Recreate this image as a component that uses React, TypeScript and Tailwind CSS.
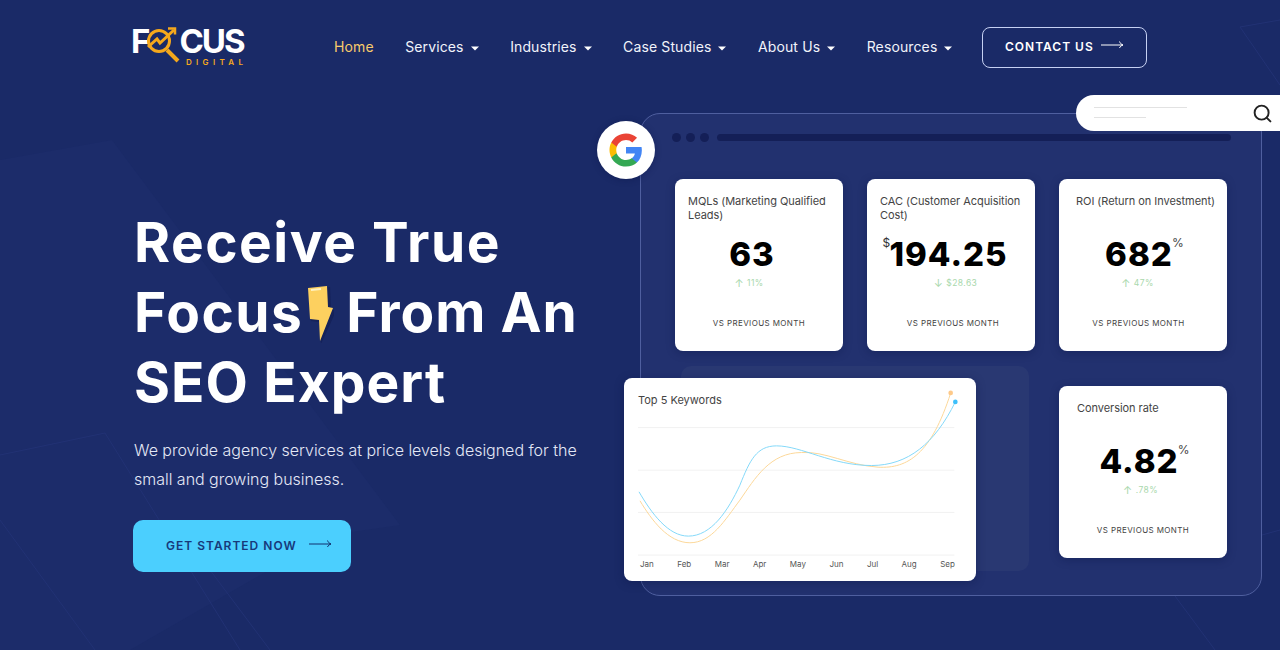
import { Search } from "lucide-react"

const navItems = [
  { label: "Home", active: true },
  { label: "Services", caret: true },
  { label: "Industries", caret: true },
  { label: "Case Studies", caret: true },
  { label: "About Us", caret: true },
  { label: "Resources", caret: true },
]

const months = ["Jan", "Feb", "Mar", "Apr", "May", "Jun", "Jul", "Aug", "Sep"]

function LongArrow({ color = "#fff" }: { color?: string }) {
  return (
    <svg width="23" height="10" viewBox="0 0 23 10" fill="none" stroke={color} strokeWidth="1" className="mb-[4px]">
      <path d="M0 5h22M18.5 1.5c.6 1.6 1.8 3 3.5 3.5-1.7.5-2.9 1.6-3.5 3" />
    </svg>
  )
}

function Caret() {
  return (
    <svg width="8" height="5" viewBox="0 0 8 5" className="mt-[3px]">
      <path d="M0 .5h8L4 4.5z" fill="#fff" />
    </svg>
  )
}

function Logo() {
  return (
    <div className="relative h-[40px] w-[112px] font-['Inter',sans-serif] text-white">
      <div className="flex h-[30px] items-center text-[33px] font-bold leading-none tracking-[-2px]">
        <span className="-ml-[2px]">F</span>
        <svg width="33" height="38" viewBox="0 0 33 38" className="-ml-[1px] mt-[6px] shrink-0" fill="none" stroke="#f5a81c" strokeWidth="3">
          <circle cx="12" cy="15" r="10.5" />
          <path d="M20 24l11 11" strokeWidth="4" />
          <path d="M1 21l9-8 3 4 14-13" strokeWidth="3" />
          <path d="M21 2.5h7v6" strokeWidth="2.5" />
        </svg>
        <span className="-ml-[1px]">CUS</span>
      </div>
      <div className="ml-[53px] text-[8px] font-semibold uppercase leading-[10px] tracking-[4.3px] text-[#f5a81c]">
        Digital
      </div>
    </div>
  )
}

function Bolt() {
  return (
    <svg width="30" height="58" viewBox="0 0 30 58" className="ml-[1px] mr-[12px] inline-block align-[-11px]">
      <path d="M5 4l20-3 1 22 5 2-15 33-2-22-8-1z" fill="#101a4d" opacity=".5" transform="translate(1 1)" />
      <path d="M4 3l19-2 1 21 5 1-13 33-1-21-9-1z" fill="#fdd05f" />
      <path d="M7 5l10-1" stroke="#fff2c2" strokeWidth="2" />
    </svg>
  )
}

type CardProps = {
  title: string
  value: string
  delta: string
  down?: boolean
  prefix?: string
  suffix?: boolean
  titleClass: string
  valueClass: string
  deltaClass: string
  footClass?: string
}

function MetricCard({ title, value, delta, down, prefix, suffix, titleClass, valueClass, deltaClass, footClass }: CardProps) {
  return (
    <div className="h-[172px] w-[168px] rounded-[8px] bg-white pt-[16px] shadow-[0_2px_8px_rgba(10,20,70,0.35)]">
      <div className={`h-[41px] text-[11px] leading-[13.5px] tracking-[-0.05px] text-[#444] ${titleClass}`}>{title}</div>
      <div className={`flex h-[36px] justify-center ${valueClass}`}>
        <span className="relative text-[33px] font-extrabold leading-[36px] tracking-[1px] text-[#000]">
          {prefix ? <span className="absolute -left-[7px] top-0 text-[12px] font-normal leading-[14px] tracking-normal text-[#333]">{prefix}</span> : null}
          {value}
          {suffix ? <span className="absolute -right-[11px] top-0 text-[12px] font-normal leading-[14px] tracking-normal text-[#444]">%</span> : null}
        </span>
      </div>
      <div className={`mt-[4px] flex h-[14px] items-center justify-center gap-[3px] text-[8.5px] tracking-[0.4px] text-[#a9d8ac] ${deltaClass}`}>
        <span className="text-[11px] leading-none">{down ? "↓" : "↑"}</span>
        {delta}
      </div>
      <div className={`mt-[27px] text-center text-[8px] uppercase leading-[12px] tracking-[0.4px] text-[#444] ${footClass ?? ""}`}>
        Vs previous month
      </div>
    </div>
  )
}

function KeywordChart() {
  return (
    <div className="absolute -left-[17px] top-[264px] h-[203px] w-[352px] rounded-[8px] bg-white pl-[14px] pr-[18px] pt-[15px] shadow-[0_2px_10px_rgba(10,20,70,0.4)]">
      <div className="h-[15px] text-[11px] leading-[15px] text-[#444]">Top 5 Keywords</div>
      <svg width="320" height="149" viewBox="69 114 961 446" fill="none" className="overflow-visible">
        <g stroke="#ececec" strokeWidth="2">
          <path d="M69 172h950M69 300h950M69 427h950M69 555h950" />
        </g>
        <path
          d="M75 392C110 450 160 518 225 518C290 518 330 450 375 390C420 325 465 247 560 247C630 242 700 285 790 291C880 296 950 250 1008 68"
          stroke="#fcd89a"
          strokeWidth="3"
        />
        <path
          d="M72 365C110 430 160 498 220 498C290 498 340 420 375 345C405 270 425 227 485 227C560 227 650 286 770 286C880 286 960 220 1022 95"
          stroke="#85d9f9"
          strokeWidth="3"
        />
        <circle cx="1008" cy="68" r="7" fill="#fdc98a" />
        <circle cx="1022" cy="95" r="7" fill="#3cc0fb" />
      </svg>
      <div className="flex justify-between pl-[2px] pr-[3px] text-[8px] leading-[14px] text-[#555]">
        {months.map((m) => (
          <span key={m}>{m}</span>
        ))}
      </div>
    </div>
  )
}

function Dashboard() {
  return (
    <div className="relative ml-[-1px] mt-[19px] h-[483px] w-[622px] shrink-0 rounded-[20px] border border-[#4f5f9f] bg-[#22316f] pl-[34px] pt-[18px]">
      <div className="-ml-[3px] flex h-[10px] items-center gap-[5px]">
        <span className="size-[9px] rounded-full bg-[#141f57]" />
        <span className="size-[9px] rounded-full bg-[#141f57]" />
        <span className="size-[9px] rounded-full bg-[#141f57]" />
        <span className="ml-[3px] h-[7px] w-[514px] rounded-full bg-[#141f57]" />
      </div>
      <div className="mt-[37px] flex gap-[24px]">
        <MetricCard title="MQLs (Marketing Qualified Leads)" value="63" delta="11%" titleClass="pl-[13px] pr-[8px]" valueClass="pr-[14px]" deltaClass="pr-[20px]" />
        <MetricCard title="CAC (Customer Acquisition Cost)" value="194.25" delta="$28.63" down prefix="$" titleClass="pl-[13px] pr-[8px]" valueClass="pr-[5px]" deltaClass="pl-[9px]" footClass="pl-[4px]" />
        <MetricCard title="ROI (Return on Investment)" value="682" delta="47%" suffix titleClass="pl-[17px]" valueClass="pr-[8px]" deltaClass="pr-[11px]" footClass="pr-[9px]" />
      </div>
      <div className="mt-[35px] flex justify-end pr-[34px]">
        <MetricCard title="Conversion rate" value="4.82" delta=".78%" suffix titleClass="pl-[18px]" valueClass="pr-[8px]" deltaClass="pr-[5px]" />
      </div>
      <div className="absolute left-[40px] top-[252px] h-[205px] w-[348px] rounded-[10px] bg-[#293872]" />
      <KeywordChart />
      <div className="absolute -left-[44px] top-[7px] flex size-[58px] items-center justify-center rounded-full bg-white shadow-[0_1px_6px_rgba(10,20,70,0.4)]">
        <svg width="36" height="36" viewBox="0 0 24 24">
          <path fill="#4285F4" d="M22.56 12.25c0-.78-.07-1.53-.2-2.25H12v4.26h5.92c-.26 1.37-1.04 2.53-2.21 3.31v2.77h3.57c2.08-1.92 3.28-4.74 3.28-8.09z" />
          <path fill="#34A853" d="M12 23c2.97 0 5.46-.98 7.28-2.66l-3.57-2.77c-.98.66-2.23 1.06-3.71 1.06-2.86 0-5.29-1.93-6.16-4.53H2.18v2.84C3.99 20.53 7.7 23 12 23z" />
          <path fill="#FBBC05" d="M5.84 14.09c-.22-.66-.35-1.36-.35-2.09s.13-1.43.35-2.09V7.07H2.18C1.43 8.55 1 10.22 1 12s.43 3.45 1.18 4.93l2.85-2.22.81-.62z" />
          <path fill="#EA4335" d="M12 5.38c1.62 0 3.06.56 4.21 1.64l3.15-3.15C17.45 2.09 14.97 1 12 1 7.7 1 3.99 3.47 2.18 7.07l3.66 2.84c.87-2.6 3.3-4.53 6.16-4.53z" />
        </svg>
      </div>
      <div className="absolute left-[435px] -top-[19px] flex h-[36px] w-[220px] items-center rounded-full bg-white pl-[18px] pr-[23px]">
        <div className="mb-[2px] flex-1 space-y-[9px]">
          <div className="h-px w-[93px] bg-[#e2e2e2]" />
          <div className="h-px w-[52px] bg-[#e2e2e2]" />
        </div>
        <Search size={21} strokeWidth={2.2} color="#222" />
      </div>
    </div>
  )
}

export default function App() {
  return (
    <div className="relative h-[650px] w-full overflow-hidden bg-[#1a2a67] font-['Inter',sans-serif] text-white">
      <svg className="absolute inset-0" width="1280" height="650" fill="none">
        <path d="M0 160L112 140L400 525L330 535L130 650H0z" fill="#1c2c6a" />
        <g stroke="#223274" strokeWidth="1">
          <path d="M0 455L105 433L240 650M0 520L95 650M210 570L270 650M1240 27L1280 20M1240 27L1280 85M1175 596L1215 650M1262 535L1280 530" />
        </g>
      </svg>
      <header className="relative flex h-[94px] items-center pl-[133px]">
        <div className="mb-[1px] w-[201px]">
          <Logo />
        </div>
        <nav className="flex gap-[31.5px] text-[14px] leading-[20px] tracking-[0.12px]">
          {navItems.map((item) => (
            <a key={item.label} className={`flex items-center gap-[7px] ${item.active ? "text-[#f8cb6b]" : "text-[#f1f3fa]"}`}>
              {item.label}
              {item.caret ? <Caret /> : null}
            </a>
          ))}
        </nav>
        <a className="ml-[29.5px] flex h-[41px] w-[165px] items-center justify-center gap-[7px] rounded-[8px] border border-[#c6d0f2] text-[12px] font-semibold tracking-[1px]">
          CONTACT US
          <LongArrow />
        </a>
      </header>
      <main className="relative flex items-start">
        <div className="w-[641px] shrink-0 pl-[134px] pt-[113px]">
          <h1 className="text-[55px] font-bold leading-[70px] tracking-[1.5px]">
            Receive True
            <br />
            Focus
            <Bolt />
            <span className="tracking-[1px]">From An</span>
            <br />
            <span className="tracking-[1.1px]">SEO Expert</span>
          </h1>
          <p className="mt-[19px] w-[470px] text-[16px] font-light leading-[29px] tracking-[-0.02px] text-[#e4e8f6]">
            We provide agency services at price levels designed for the small and growing business.
          </p>
          <a className="-ml-px mt-[26px] flex h-[52px] w-[218px] items-center gap-[12px] rounded-[10px] bg-[#4bcffe] pl-[33px] text-[12px] font-semibold tracking-[1px] text-[#17397a]">
            GET STARTED NOW
            <LongArrow color="#12306e" />
          </a>
        </div>
        <Dashboard />
      </main>
    </div>
  )
}
